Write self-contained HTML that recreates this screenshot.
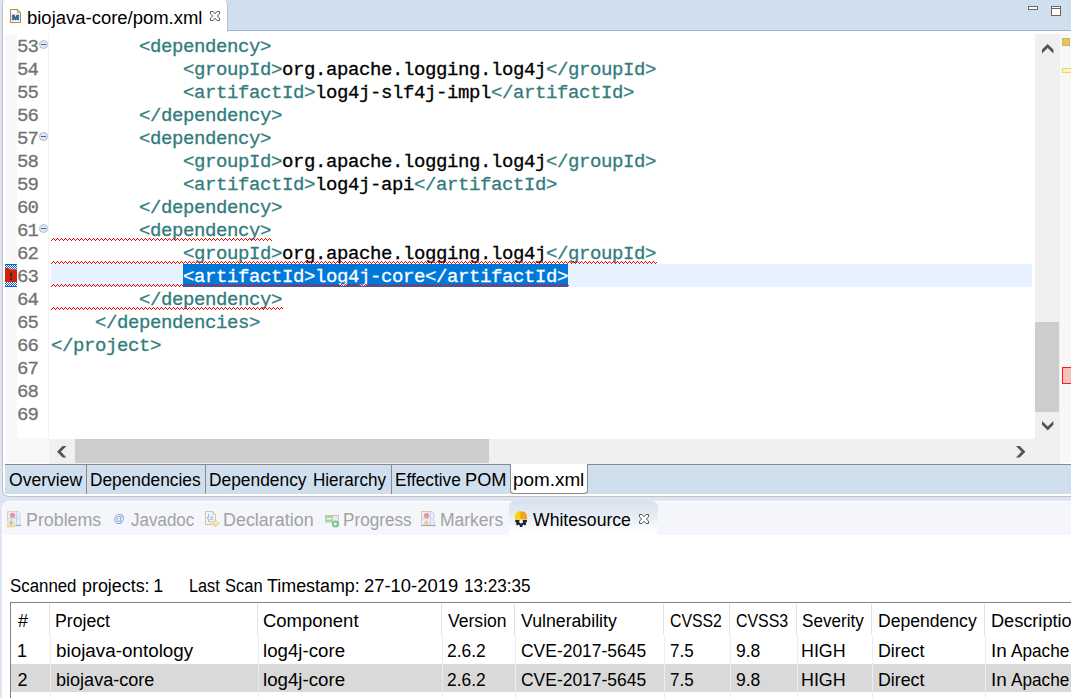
<!DOCTYPE html>
<html><head><meta charset="utf-8">
<style>
*{box-sizing:border-box;margin:0;padding:0}
html,body{width:1071px;height:698px;overflow:hidden;background:#fff}
body{position:relative;font-family:"Liberation Sans",sans-serif;color:#000}
.abs{position:absolute}
svg{position:absolute;overflow:visible}
/* frame */
#lav{left:0;top:0;width:1071px;height:698px;background:#dfe4f5}
#edpane{left:2px;top:0;width:1075px;height:497px;background:#fff;border:1px solid #c2c2c2;border-top:none;border-radius:3px 0 0 7px}
#topbar{left:3px;top:0;width:1068px;height:31px;background:#d0dfee;border-bottom:1px solid #a7b4ca}
#tab1{left:3px;top:0;width:225px;height:32px;background:#fff;border-right:1px solid #b4c2d8;border-top-right-radius:3px 6px;border-top-left-radius:3px}
.ui{font-size:18px;white-space:pre;line-height:22px;transform-origin:0 0}
/* editor */
.mono{font-family:"Liberation Mono",monospace;font-size:19px;letter-spacing:-0.4px;line-height:23px;white-space:pre;-webkit-text-stroke:0.3px currentColor}
.ln{left:17px;color:#727272;-webkit-text-stroke:0.3px currentColor;letter-spacing:-0.9px}
.code{left:51px;color:#317c7c}
.code b{font-weight:normal;color:#000}
#ruler{left:5px;top:34px;width:44px;height:429px;background:#f8f8f8}
#lncol{left:17px;top:34px;width:31px;height:404px;background:#fff}
#lnsep{left:48px;top:34px;width:1px;height:404px;background:#f3f3f3}
#curline{left:51px;top:264px;width:981px;height:23px;background:#e8f2fe}
#sel{left:183px;top:264px;width:385px;height:23px;background:#0078d7}
.sq{height:4px;left:51px}
/* scrollbars */
#vsb{left:1035px;top:34px;width:25px;height:429px;background:#f0f0f0}
#vthumb{left:1035px;top:322px;width:24px;height:90px;background:#cdcdcd}
#ovr{left:1060px;top:34px;width:11px;height:429px;background:#f8f8f8}
#hsb{left:49px;top:439px;width:1011px;height:25px;background:#f0f0f0}
#hthumb{left:75px;top:439px;width:414px;height:24px;background:#cdcdcd}
/* bottom editor tabs */
#btabs{left:5px;top:464px;width:1066px;height:30px;background:#d0dfee;border-top:1px solid #8a8a8a}
.bsep{top:465px;width:1px;height:29px;background:#8a8a8a}
#bact{left:510px;top:464px;width:78px;height:30px;background:#fff;border:1px solid #8a8a8a;border-top:none;border-radius:0 0 4px 4px}
.bt{top:469px}
/* bottom panel */
#panel{left:2px;top:501px;width:1075px;height:210px;background:#fff;border-radius:7px 0 0 0}
#pstrip{left:3px;top:502px;width:1068px;height:33px;background:#f4f6fb;border-radius:6px 0 0 0}
#wtab{left:509px;top:501px;width:149px;height:34px;border-radius:6px 6px 0 0;background:linear-gradient(#d7e1ee,#e4ebf4 40%,#fff 95%)}
.pt{top:509px;color:#a2a2a2}
/* table */
#tbl{left:10px;top:602px;width:1070px;height:100px;border-top:1px solid #7a7f88;border-left:1px solid #7a7f88;background:#fff}
#row2{left:11px;top:664px;width:1060px;height:28px;background:#d9d9d9}
.cs{top:604px;width:1px;height:31px;background:#e2e2e2}
.cs2{top:635px;width:1px;height:63px;background:#ededed}
.c{white-space:pre;font-size:18px;line-height:22px;transform-origin:0 0}
</style></head><body>
<div id="lav" class="abs"></div>
<div id="edpane" class="abs"></div>
<div id="topbar" class="abs"></div>
<div id="tab1" class="abs"></div>
<!-- pom icon -->
<svg style="left:10px;top:9px" width="12" height="15" viewBox="0 0 12 15"><path d="M0.5 0.5H7.5L10.5 3.5V13.5H0.5Z" fill="#fffef6" stroke="#ab8b3c"/><path d="M7.5 0.5V3.5H10.5Z" fill="#eadfb8" stroke="#ab8b3c" stroke-width=".7"/><rect x="1.5" y="4.6" width="8" height="7" fill="#e4ecf8"/><text x="1.7" y="10.9" font-family="Liberation Sans" font-weight="bold" font-size="7.6" fill="#1c5a9a" stroke="#1c5a9a" stroke-width=".45" textLength="7.3" lengthAdjust="spacingAndGlyphs">M</text></svg>
<div class="abs ui" id="tabtxt" style="left:26.67px;top:7px;transform:scaleX(1.0257)">biojava-core/pom.xml</div>
<!-- close x -->
<svg style="left:210px;top:11px" width="10" height="10" viewBox="0 0 10 10"><path d="M0.5 0.5H3L5 2.8L7 0.5H9.5V3L7.2 5L9.5 7V9.5H7L5 7.2L3 9.5H0.5V7L2.8 5L0.5 3Z" fill="#fff" stroke="#5a5a5a" stroke-width="1"/></svg>
<!-- min / max -->
<div class="abs" style="left:1028px;top:6px;width:10px;height:4px;border:1px solid #666;background:#fff"></div>
<div class="abs" style="left:1051px;top:6px;width:10px;height:10px;border:1px solid #666;background:#fff"></div><div class="abs" style="left:1051px;top:8px;width:10px;height:1px;background:#666"></div>

<div id="ruler" class="abs"></div>
<div id="lncol" class="abs"></div>
<div id="lnsep" class="abs"></div>
<div id="curline" class="abs"></div>
<div id="sel" class="abs"></div>
<div class="abs mono ln" id="lns" style="top:36px">53
54
55
56
57
58
59
60
61
62
63
64
65
66
67
68
69</div>
<div class="abs mono code" id="code" style="top:36px">        &lt;dependency&gt;
            &lt;groupId&gt;<b>org.apache.logging.log4j</b>&lt;/groupId&gt;
            &lt;artifactId&gt;<b>log4j-slf4j-impl</b>&lt;/artifactId&gt;
        &lt;/dependency&gt;
        &lt;dependency&gt;
            &lt;groupId&gt;<b>org.apache.logging.log4j</b>&lt;/groupId&gt;
            &lt;artifactId&gt;<b>log4j-api</b>&lt;/artifactId&gt;
        &lt;/dependency&gt;
        &lt;dependency&gt;
            &lt;groupId&gt;<b>org.apache.logging.log4j</b>&lt;/groupId&gt;
            <span style="color:#fff">&lt;artifactId&gt;log4j-core&lt;/artifactId&gt;</span>
        &lt;/dependency&gt;
    &lt;/dependencies&gt;
&lt;/project&gt;</div>
<!-- squiggles -->
<svg width="0" height="0"><defs><pattern id="zz" width="4" height="3" patternUnits="userSpaceOnUse"><path d="M0 2h1v1h-1zM1 1h1v1h-1zM2 0h1v1h-1zM3 1h1v1h-1z" fill="#ff0000" shape-rendering="crispEdges"/></pattern></defs></svg>
<svg style="left:51px;top:238px" width="221" height="3" shape-rendering="crispEdges"><rect width="221" height="3" fill="url(#zz)"/></svg>
<svg style="left:51px;top:261px" width="606" height="3" shape-rendering="crispEdges"><rect width="606" height="3" fill="url(#zz)"/></svg>
<svg style="left:51px;top:284px" width="518" height="3" shape-rendering="crispEdges"><rect width="518" height="3" fill="url(#zz)"/></svg>
<svg style="left:51px;top:307px" width="232" height="3" shape-rendering="crispEdges"><rect width="232" height="3" fill="url(#zz)"/></svg>
<!-- fold markers -->
<svg style="left:39px;top:40px" width="9" height="9"><circle cx="4.5" cy="4.5" r="4" fill="#e3eaf3" stroke="#a9b8cf"/><path d="M2 4.5H7" stroke="#4a5c7c" stroke-width="1"/></svg>
<svg style="left:39px;top:132px" width="9" height="9"><circle cx="4.5" cy="4.5" r="4" fill="#e3eaf3" stroke="#a9b8cf"/><path d="M2 4.5H7" stroke="#4a5c7c" stroke-width="1"/></svg>
<svg style="left:39px;top:224px" width="9" height="9"><circle cx="4.5" cy="4.5" r="4" fill="#e3eaf3" stroke="#a9b8cf"/><path d="M2 4.5H7" stroke="#4a5c7c" stroke-width="1"/></svg>
<!-- error marker -->
<svg style="left:5px;top:264px" width="12" height="23"><defs><pattern id="ck" width="2" height="2" patternUnits="userSpaceOnUse"><rect width="2" height="2" fill="#0a64c8"/><rect width="1" height="1" fill="#fff"/><rect x="1" y="1" width="1" height="1" fill="#fff"/></pattern></defs><rect width="12" height="23" fill="url(#ck)"/><rect y="0" width="12" height="1" fill="#0a64c8"/><rect y="22" width="12" height="1" fill="#0a64c8"/><path d="M0 4H3L4.5 5.5H12V18H0Z" fill="#d3210d"/><rect x="5" y="8" width="2" height="5" rx="1" fill="#3a2a2a"/><rect x="5" y="14" width="2" height="2" fill="#3a2a2a"/></svg>
<!-- scrollbars -->
<div id="vsb" class="abs"></div>
<div id="vthumb" class="abs"></div>
<div id="ovr" class="abs"></div>
<div id="hsb" class="abs"></div>
<div id="hthumb" class="abs"></div>
<svg style="left:1042px;top:43.7px" width="12" height="10"><path d="M0 5.6L5.7 0L11.4 5.6V9.4L5.7 3.9L0 9.4Z" fill="#555"/></svg>
<svg style="left:1041.8px;top:420.7px" width="12" height="10"><path d="M0 3.8L5.7 9.4L11.4 3.8V0L5.7 5.5L0 0Z" fill="#555"/></svg>
<svg style="left:57px;top:445.8px" width="10" height="12"><path d="M5.6 0L0 5.7L5.6 11.4H9.4L3.9 5.7L9.4 0Z" fill="#555"/></svg>
<svg style="left:1016px;top:445.6px" width="10" height="12"><path d="M3.8 0L9.4 5.7L3.8 11.4H0L5.5 5.7L0 0Z" fill="#555"/></svg>
<!-- overview ruler marks -->
<div class="abs" style="left:1062px;top:38px;width:8px;height:8px;background:#f4c52c;border:1px solid #b9b2a0"></div>
<div class="abs" style="left:1062px;top:68px;width:12px;height:5px;background:#fdf0c4;border:1px solid #f5d35f"></div>
<div class="abs" style="left:1062px;top:367px;width:12px;height:17px;background:#f9bebe;border:1px solid #f02020"></div>
<!-- bottom editor tabs -->
<div id="btabs" class="abs"></div>
<div class="abs bsep" style="left:86px"></div>
<div class="abs bsep" style="left:205px"></div>
<div class="abs bsep" style="left:391px"></div>
<div id="bact" class="abs"></div>
<div class="abs ui bt" id="b1" style="left:8.92px;transform:scaleX(0.9756)">Overview</div>
<div class="abs ui bt" id="b2" style="left:90.05px;transform:scaleX(0.9612)">Dependencies</div>
<div class="abs ui bt" id="b3a" style="left:208.65px;transform:scaleX(0.9651)">Dependency</div>
<div class="abs ui bt" id="b3b" style="left:313.17px;transform:scaleX(0.9482)">Hierarchy</div>
<div class="abs ui bt" id="b4a" style="left:394.66px;transform:scaleX(0.9566)">Effective</div>
<div class="abs ui bt" id="b4b" style="left:464.89px;transform:scaleX(1.0103)">POM</div>
<div class="abs ui bt" id="b5" style="left:513.35px;transform:scaleX(1.0485)">pom.xml</div>
<!-- bottom panel -->
<div id="panel" class="abs"></div>
<div id="pstrip" class="abs"></div>
<div id="wtab" class="abs"></div>
<div class="abs ui pt" id="p1" style="left:25.81px;transform:scaleX(0.9902)">Problems</div>
<div class="abs ui pt" id="p2" style="left:130.91px;transform:scaleX(0.9437)">Javadoc</div>
<div class="abs ui pt" id="p3" style="left:223.11px;transform:scaleX(0.9951)">Declaration</div>
<div class="abs ui pt" id="p4" style="left:342.67px;transform:scaleX(0.9525)">Progress</div>
<div class="abs ui pt" id="p5" style="left:440.04px;transform:scaleX(0.9714)">Markers</div>
<div class="abs ui" id="p6" style="left:533.1px;top:509px;transform:scaleX(0.9786)">Whitesource</div>
<svg style="left:639px;top:514px" width="10" height="10" viewBox="0 0 10 10"><path d="M0.5 0.5H3L5 2.8L7 0.5H9.5V3L7.2 5L9.5 7V9.5H7L5 7.2L3 9.5H0.5V7L2.8 5L0.5 3Z" fill="#fff" stroke="#5a5a5a" stroke-width="1"/></svg>
<!-- panel tab icons -->
<svg style="left:7px;top:511px;opacity:.55" width="15" height="17" viewBox="0 0 15 17"><path d="M0.5 0.5H11.5Q14.6 2 13.2 5Q12 8.5 14 14.5H0.5Z" fill="#dce8f8" stroke="#b4bfd8" stroke-width=".8"/><path d="M0.5 9.5V0.5H11.5" fill="none" stroke="#c4b57a"/><path d="M1 7.3H12.6M9.5 1V14" stroke="#a9b8dc" fill="none"/><path d="M8.5 14.5H14.2" stroke="#5a6aa0" stroke-width="1.3"/><circle cx="5.6" cy="4.3" r="2.6" fill="#e8404e"/><path d="M4.1 8.6Q4.6 8.6 5 9.4L8.2 14.6Q8.6 15.8 7.4 15.8H0.8Q-0.4 15.8 0 14.6L3.2 9.4Q3.6 8.6 4.1 8.6Z" fill="#f7d874" stroke="#e0aa40" stroke-width=".7"/><path d="M4.1 10.6V13M4.1 13.8V14.8" stroke="#4a3a20" stroke-width="1.1"/></svg>
<div class="abs" style="left:113.5px;top:511px;font:italic bold 11px/14px 'Liberation Sans',sans-serif;color:#76a5d6">@</div>
<svg style="left:205px;top:511px;opacity:.6" width="15" height="16" viewBox="0 0 15 16"><path d="M0.5 0.5H7.5L10.5 3.5V13.5H0.5Z" fill="#eef3fc" stroke="#c4a65a"/><path d="M7.5 0.5V3.5H10.5Z" fill="#e8d49a" stroke="#c4a65a" stroke-width=".6"/><path d="M4.6 3.2Q3.2 3.2 3.4 5Q3.5 6.8 2.2 7Q3.5 7.2 3.4 9Q3.2 10.8 4.6 10.8" fill="none" stroke="#4a80c0" stroke-width="1"/><path d="M5.2 6.2H8.2M5.2 8.2H8.2" stroke="#4a80c0" stroke-width="1.1"/><path d="M5.2 10.8H10V9L14.3 12.3L10 15.6V13.8H5.2Z" fill="#f8e08a" stroke="#cf9f40" stroke-width=".8"/></svg>
<svg style="left:325px;top:514.5px;opacity:.62" width="15" height="13" viewBox="0 0 15 13"><rect x="0.5" y="0.5" width="13" height="6.5" fill="#dde8f5" stroke="#a0a8b8"/><path d="M0.5 0.5H13.5" stroke="#c09870"/><rect x="1" y="1" width="7" height="5.8" fill="#74c95c"/><rect x="1.5" y="3" width="5.5" height="1.4" fill="#fff"/><circle cx="10.5" cy="9" r="3.6" fill="#3da045"/><path d="M9.3 6.9L12.6 9L9.3 11.1Z" fill="#fff"/></svg>
<svg style="left:421px;top:511px;opacity:.55" width="15" height="16" viewBox="0 0 15 16"><path d="M0.5 0.5H11Q14 2 13 5Q11.5 9 14 14.5H0.5Z" fill="#dfeaf8" stroke="#a9b3cf"/><path d="M0.5 10V0.5H11" fill="none" stroke="#b9a85a"/><path d="M1 7.5H12M9.5 1V14" stroke="#a9b8dc" fill="none"/><path d="M0.5 14.5H14.5" stroke="#5a6590" stroke-width="1.2"/><circle cx="5.6" cy="4.5" r="2.6" fill="#e8404e"/><path d="M5.6 9L8.2 11.5V14H3V11.5Z" fill="#f7b52a"/></svg>
<svg style="left:514.7px;top:510.6px" width="12.4" height="17" viewBox="0 0 13 17" preserveAspectRatio="none"><path d="M0.2 8.4V6.4Q0.2 0.3 6.5 0.3Q12.6 0.3 12.6 6.4V8.4Z" fill="#f6a21e"/><path d="M0.2 8.4V6.4Q0.2 0.6 5.6 0.3V8.4Z" fill="#ffd306"/><path d="M0.3 9H12.5V11.2L11.2 11.6L11.8 13.2L10.3 14.4L9 13.5L8 14.2L7.6 16H5.2L4.8 14.2L3.8 13.5L2.5 14.4L1 13.2L1.6 11.6L0.3 11.2Z" fill="#1b2233"/><circle cx="6.4" cy="10.6" r="2" fill="#fff"/></svg>
<!-- content -->
<div class="abs c" id="s1a" style="left:9.65px;top:575px;transform:scaleX(0.9357)">Scanned</div>
<div class="abs c" id="s1b" style="left:82.41px;top:575px;transform:scaleX(0.9935)">projects:</div>
<div class="abs c" id="s1c" style="left:153.35px;top:575px">1</div>
<div class="abs c" id="s2a" style="left:188.83px;top:575px;transform:scaleX(0.904)">Last</div>
<div class="abs c" id="s2b" style="left:224.97px;top:575px;transform:scaleX(0.9152)">Scan</div>
<div class="abs c" id="s2c" style="left:267.0px;top:575px;transform:scaleX(0.994)">Timestamp:</div>
<div class="abs c" id="s2d" style="left:364.18px;top:575px;transform:scaleX(1.0225)">27-10-2019</div>
<div class="abs c" id="s2e" style="left:463.86px;top:575px;transform:scaleX(0.9507)">13:23:35</div>
<div id="tbl" class="abs"></div>
<div id="row2" class="abs"></div>
<div class="abs cs" style="left:49px"></div><div class="abs cs2" style="left:50px"></div>
<div class="abs cs" style="left:257px"></div><div class="abs cs2" style="left:258px"></div>
<div class="abs cs" style="left:441px"></div><div class="abs cs2" style="left:442px"></div>
<div class="abs cs" style="left:514px"></div><div class="abs cs2" style="left:515px"></div>
<div class="abs cs" style="left:663px"></div><div class="abs cs2" style="left:664px"></div>
<div class="abs cs" style="left:729px"></div><div class="abs cs2" style="left:730px"></div>
<div class="abs cs" style="left:796px"></div><div class="abs cs2" style="left:797px"></div>
<div class="abs cs" style="left:871px"></div><div class="abs cs2" style="left:872px"></div>
<div class="abs cs" style="left:984px"></div><div class="abs cs2" style="left:985px"></div>
<div class="abs c" id="c0_0" style="left:18.0px;top:610px">#</div>
<div class="abs c" id="c0_1" style="left:17.05px;top:640px">1</div>
<div class="abs c" id="c0_2" style="left:17.55px;top:669px">2</div>
<div class="abs c" id="c1_0" style="left:55.33px;top:610px;transform:scaleX(0.9813)">Project</div>
<div class="abs c" id="c1_1" style="left:55.55px;top:640px;transform:scaleX(1.047)">biojava-ontology</div>
<div class="abs c" id="c1_2" style="left:55.6px;top:669px;transform:scaleX(1.0037)">biojava-core</div>
<div class="abs c" id="c2_0" style="left:263.48px;top:610px;transform:scaleX(1.0265)">Component</div>
<div class="abs c" id="c2_1" style="left:263.15px;top:640px;transform:scaleX(1.0385)">log4j-core</div>
<div class="abs c" id="c2_2" style="left:263.15px;top:669px;transform:scaleX(1.0385)">log4j-core</div>
<div class="abs c" id="c3_0" style="left:447.9px;top:610px;transform:scaleX(0.9758)">Version</div>
<div class="abs c" id="c3_1" style="left:447.13px;top:640px;transform:scaleX(0.9655)">2.6.2</div>
<div class="abs c" id="c3_2" style="left:447.13px;top:669px;transform:scaleX(0.9655)">2.6.2</div>
<div class="abs c" id="c4_0" style="left:521.4px;top:610px;transform:scaleX(0.9837)">Vulnerability</div>
<div class="abs c" id="c4_1" style="left:520.53px;top:640px;transform:scaleX(0.9696)">CVE-2017-5645</div>
<div class="abs c" id="c4_2" style="left:520.53px;top:669px;transform:scaleX(0.9696)">CVE-2017-5645</div>
<div class="abs c" id="c5_0" style="left:669.91px;top:610px;transform:scaleX(0.8776)">CVSS2</div>
<div class="abs c" id="c5_1" style="left:669.85px;top:640px;transform:scaleX(0.944)">7.5</div>
<div class="abs c" id="c5_2" style="left:669.85px;top:669px;transform:scaleX(0.944)">7.5</div>
<div class="abs c" id="c6_0" style="left:735.6px;top:610px;transform:scaleX(0.8848)">CVSS3</div>
<div class="abs c" id="c6_1" style="left:735.62px;top:640px;transform:scaleX(0.974)">9.8</div>
<div class="abs c" id="c6_2" style="left:735.62px;top:669px;transform:scaleX(0.974)">9.8</div>
<div class="abs c" id="c7_0" style="left:801.84px;top:610px;transform:scaleX(0.9498)">Severity</div>
<div class="abs c" id="c7_1" style="left:801.21px;top:640px;transform:scaleX(0.9929)">HIGH</div>
<div class="abs c" id="c7_2" style="left:801.21px;top:669px;transform:scaleX(0.9929)">HIGH</div>
<div class="abs c" id="c8_0" style="left:877.63px;top:610px;transform:scaleX(0.9762)">Dependency</div>
<div class="abs c" id="c8_1" style="left:877.62px;top:640px;transform:scaleX(0.9867)">Direct</div>
<div class="abs c" id="c8_2" style="left:877.62px;top:669px;transform:scaleX(0.9867)">Direct</div>
<div class="abs c" id="c9_0" style="left:990.59px;top:610px;transform:scaleX(1.0075)">Description</div>
<div class="abs c" id="c9_1a" style="left:990.62px;top:640px;transform:scaleX(1.0487)">In</div>
<div class="abs c" id="c9_1b" style="left:1011.2px;top:640px;transform:scaleX(0.9546)">Apache</div>
<div class="abs c" id="c9_2a" style="left:990.62px;top:669px;transform:scaleX(1.0487)">In</div>
<div class="abs c" id="c9_2b" style="left:1011.2px;top:669px;transform:scaleX(0.9546)">Apache</div>
</body></html>
